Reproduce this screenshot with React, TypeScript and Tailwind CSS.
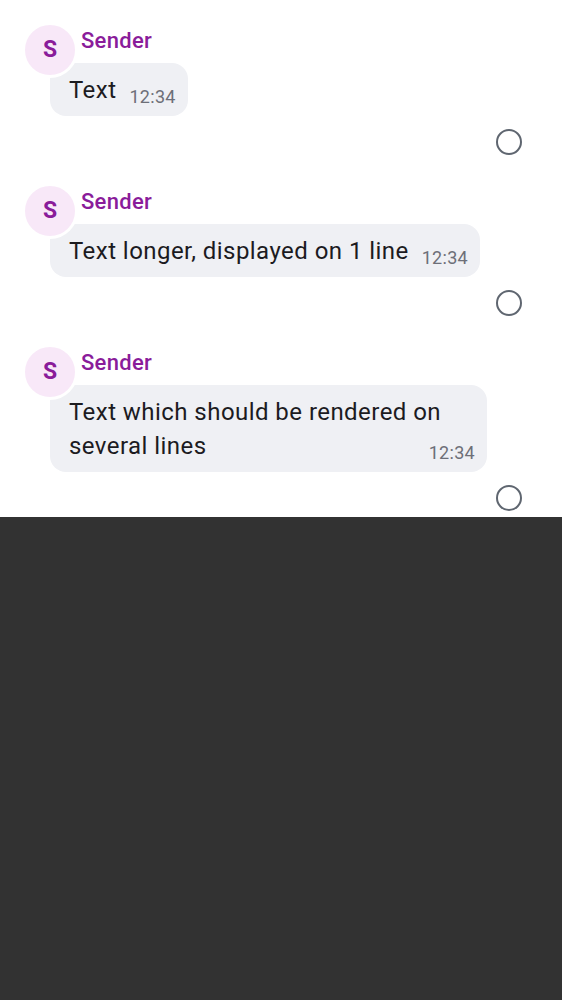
const messages = [
  { id: 1, sender: "Sender", text: "Text", time: "12:34" },
  { id: 2, sender: "Sender", text: "Text longer, displayed on 1 line", time: "12:34" },
  { id: 3, sender: "Sender", text: "Text which should be rendered on several lines", time: "12:34" },
];

function Message({ sender, text, time }: { sender: string; text: string; time: string }) {
  return (
    <div className="relative pt-[29px] pb-[6px]">
      {/* Bubble */}
      <div className="ml-[81px] text-[22px] leading-6 font-medium tracking-[0.3px] text-[#8a1c9a]">
        {sender}
      </div>
      <div className="ml-[50px] mt-[10px]">
        <div className="inline-block max-w-[437px] rounded-[16px] bg-[#eff0f4] pl-[19px] pr-[12px] pt-[10px] pb-[9px] text-[24px] leading-[34px] tracking-[0.45px] text-[#1c1b1f]">
          {text}
          <span className="float-right ml-[13px] mt-[14px] text-[18px] leading-5 tracking-[0.3px] text-[#6d6f78]">
            {time}
          </span>
        </div>
      </div>

      {/* Avatar */}
      <div className="absolute left-[22px] top-[22px] flex h-[56px] w-[56px] items-center justify-center rounded-full border-[3px] border-white bg-[#f8e8f8] text-[23px] font-bold text-[#8a1c9a]">
        S
      </div>

      {/* Select */}
      <div className="mt-[13px] flex justify-end pr-[40px]">
        <div className="h-[26px] w-[26px] rounded-full border-[2.5px] border-[#5f6670]" />
      </div>
    </div>
  );
}

export default function App() {
  return (
    <div className="flex h-[1000px] flex-col font-['Roboto',sans-serif]">
      <div className="bg-white">
        {messages.map((m) => (
          <Message key={m.id} sender={m.sender} text={m.text} time={m.time} />
        ))}
      </div>
      <div className="flex-1 bg-[#323232]" />
    </div>
  );
}
